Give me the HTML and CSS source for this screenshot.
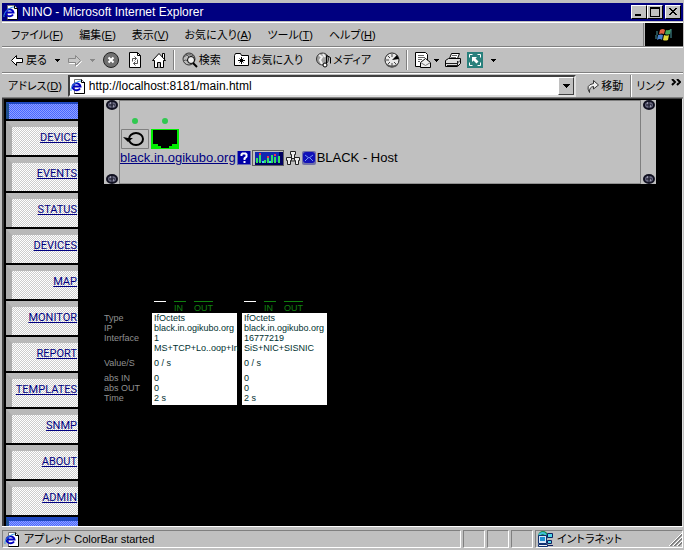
FILE: index.html
```html
<!DOCTYPE html>
<html lang="ja">
<head>
    <meta charset="UTF-8">
    <meta name="viewport" content="width=device-width, initial-scale=1.0">
    <title>NINO - Microsoft Internet Explorer</title>
    <link rel="stylesheet" href="styles.css">
</head>
<body>
    <!-- shared icons -->
    <svg class="sprites" aria-hidden="true">
        <symbol id="ie-page" viewBox="0 0 16 16">
            <path d="M4.500 1.500h7l3 3v11h-10z" fill="#fff" stroke="#777"/>
            <path d="M14.500 4v11.500h-10M11.500 1.500v3h3" fill="none" stroke="#000"/>
            <path d="M10 10.500a4 3.500 0 1 1 .5-2H3" fill="none" stroke="#0000c0" stroke-width="2"/>
            <path d="M1 13C0 9 6 3 11 3" fill="none" stroke="#3898e0"/>
        </symbol>
        <symbol id="screw" viewBox="0 0 12 10">
            <ellipse cx="6" cy="5" rx="6" ry="5" fill="#101020"/>
            <ellipse cx="6" cy="5" rx="4" ry="3" fill="#686880"/>
            <path d="M6 2v6M3 5h6" stroke="#181828"/>
            <path d="M4 3h1M7 6h1" stroke="#c8c8d8"/>
        </symbol>
    </svg>

    <header class="title-bar">
        <svg class="icon"><use href="#ie-page"/></svg>
        <h1>NINO - Microsoft Internet Explorer</h1>
        <div class="window-buttons">
            <button aria-label="Minimize"><svg viewBox="0 0 12 10"><path d="M2 7h6v2H2z"/></svg></button>
            <button aria-label="Maximize"><svg viewBox="0 0 12 10"><path d="M1 0h10v10H1zM2 2v7h8V2z" fill-rule="evenodd"/></svg></button>
            <button aria-label="Close" class="close"><svg viewBox="0 0 12 10"><path d="M2 1h2v1h1v1h2V2h1V1h2v1H9v1H8v1H7v1h1v1h1v1h1v1H8V7H7V6H5v1H4v1H2V7h1V6h1V5h1V4H4V3H3V2H2z"/></svg></button>
        </div>
    </header>

    <div class="menu-row">
        <nav class="menu">
            <button>ファイル(<u>F</u>)</button>
            <button>編集(<u>E</u>)</button>
            <button>表示(<u>V</u>)</button>
            <button>お気に入り(<u>A</u>)</button>
            <button>ツール(<u>T</u>)</button>
            <button>ヘルプ(<u>H</u>)</button>
        </nav>
        <div class="throbber">
            <svg viewBox="0 0 18 16">
                <path d="M5 3q3-2 5 0l-1 4q-2-1-5 0z" fill="#e06040"/>
                <path d="M11 3q2 1 5-1l-1 5q-3 1-5 0z" fill="#48a858"/>
                <path d="M3 8q3-1 5 0l-1 5q-2-2-5 0z" fill="#4880c8"/>
                <path d="M9 8q3 1 5 0l-1 5q-3 1-5 0z" fill="#e0d838"/>
                <path d="M1 5h2M1 7h2M0 9h2M0 11h2M16 2v9" stroke="#4898a0"/>
            </svg>
        </div>
    </div>

    <div class="tool-row">
        <button class="back">
            <svg class="arrow" viewBox="0 0 14 14"><path d="M1.500 7.500l5-5v3h6v4h-6v3z" fill="#fff" stroke="#000"/></svg>
            戻る
        </button>
        <button class="drop" aria-label="戻る一覧"><svg class="caret" viewBox="0 0 5 3"><path d="M0 0h5v1H4v1H3v1H2V2H1V1H0z"/></svg></button>
        <button class="forward" aria-label="進む"><svg class="arrow" viewBox="0 0 14 14"><path d="M13.500 8.500l-5-5v3h-7v4h7v3z" fill="none" stroke="#fff"/><path d="M12.500 7.500l-5-5v3h-7v4h7v3z" fill="#c8c8c8" stroke="#888"/></svg></button>
        <button class="drop off" aria-label="進む一覧"><svg class="caret" viewBox="0 0 5 3"><path d="M0 0h5v1H4v1H3v1H2V2H1V1H0z"/></svg></button>
        <div class="tool-group">
            <button aria-label="中止"><svg class="icon" viewBox="0 0 16 16"><circle cx="8" cy="8" r="7.500" fill="#707070" stroke="#222"/><path d="M5.500 5.500l5 5M10.500 5.500l-5 5" stroke="#fff" stroke-width="2"/></svg></button>
            <button aria-label="更新"><svg class="icon" viewBox="0 0 16 16"><path d="M2.500.5h8l3 3v12h-11z" fill="#fff" stroke="#000"/><path d="M10.500.5v3h3" fill="none" stroke="#000"/><path d="M5.500 9.500v-3h4M7.500 4.500l2 2-2 2M10.500 7.500v4h-4M8.500 9.500l-2 2 2 2" fill="none" stroke="#555"/></svg></button>
            <button aria-label="ホーム"><svg class="icon" viewBox="0 0 16 16"><path d="M11.500 1.500h2v6h-2z" fill="#fff" stroke="#000"/><path d="M1.500 8.500l6.500-7 6.500 7h-2v7h-9v-7z" fill="#fff" stroke="#000"/><path d="M6.500 15.500v-5h3v5" fill="#bbb" stroke="#000"/></svg></button>
        </div>
        <div class="tool-group ruled">
            <button>
                <svg class="icon" viewBox="0 0 16 16"><circle cx="7" cy="7" r="6" fill="#bbb" stroke="#333"/><path d="M2 5q4-4 10-1M1 9q3-2 5 0M4 2l3 3" stroke="#555" fill="none"/><circle cx="9" cy="8" r="3.500" fill="#eee" stroke="#000"/><path d="M11 11l4 4" stroke="#000" stroke-width="2"/></svg>
                検索
            </button>
            <button>
                <svg class="icon" viewBox="0 0 16 16"><path d="M.5 13.500v-10l1-2h5l1 2h7v10z" fill="#fff" stroke="#000"/><path d="M7.500 5v7M4 8.500h7M5.500 6.500l4 4M9.500 6.500l-4 4" stroke="#000"/></svg>
                お気に入り
            </button>
            <button>
                <svg class="icon" viewBox="0 0 16 16"><circle cx="6.500" cy="7" r="6" fill="#a0a0a0" stroke="#333"/><path d="M3 3l3 2-2 3 2 4M7 2l2 3" stroke="#eee" stroke-width="2" fill="none"/><path d="M10.500 13V3.500l4 2v6" stroke="#000" fill="none"/><ellipse cx="9" cy="13" rx="2" ry="2" fill="#fff" stroke="#000"/></svg>
                メディア
            </button>
            <button aria-label="履歴"><svg class="icon" viewBox="0 0 16 16"><circle cx="8" cy="8" r="7" fill="#e8e8e8" stroke="#222"/><path d="M8 8l5-5 2 4z" fill="#000"/><path d="M8 2v3M8 11v3M2 8h3M4 4l2 2M4 12l2-2M12 12l-2-2" stroke="#444"/><path d="M3 13q5 3 10 0" stroke="#555" stroke-width="2" fill="none"/></svg></button>
        </div>
        <div class="tool-group ruled last">
            <button class="mail" aria-label="メール">
                <svg class="icon" viewBox="0 0 16 16"><path d="M.5.5h10l2 2v12H.5z" fill="#fff" stroke="#000"/><path d="M3 3.500h6M3 5.500h7M3 7.500h4M3 9.500h2" stroke="#666"/><path d="M5.500 10.500l5-4 5 4v5h-10z" fill="#eee" stroke="#000"/><path d="M5.500 10.500l5 3 5-3" fill="none" stroke="#777"/></svg>
                <svg class="caret" viewBox="0 0 5 3"><path d="M0 0h5v1H4v1H3v1H2V2H1V1H0z"/></svg>
            </button>
            <button aria-label="印刷"><svg class="icon" viewBox="0 0 16 16"><path d="M4.500 6.500l2-5h8l-2 5z" fill="#fff" stroke="#000"/><path d="M7 3.500h5M6 5.500h5" stroke="#666"/><path d="M.5 8.500l3-2h12v5l-3 3H.5z" fill="#ddd" stroke="#000"/><path d="M1 11.500h11l3-3M2 13.500h10M12.500 9v5" fill="none" stroke="#222"/></svg></button>
            <button class="full" aria-label="全画面">
                <svg class="icon" viewBox="0 0 16 16"><path d="M0 0h16v16H0z" fill="#28807c"/><path d="M2.500 5.500v-3h3M10.500 2.500h3v3M13.500 10.500v3h-3M5.500 13.500h-3v-3" fill="none" stroke="#fff"/><path d="M5 5h5L8.500 6.500l3 3-2 2-3-3L5 10z" fill="#fff"/></svg>
                <svg class="caret" viewBox="0 0 5 3"><path d="M0 0h5v1H4v1H3v1H2V2H1V1H0z"/></svg>
            </button>
        </div>
    </div>

    <form class="address-row">
        <label for="address">アドレス(<u>D</u>)</label>
        <div class="combo">
            <svg class="icon"><use href="#ie-page"/></svg>
            <input type="text" id="address" value="http://localhost:8181/main.html">
            <button type="button" aria-label="一覧"><svg viewBox="0 0 7 4"><path d="M0 0h7v1H6v1H5v1H4v1H3V3H2V2H1V1H0z"/></svg></button>
        </div>
        <button type="button" class="go">
            <svg viewBox="0 0 14 14"><path d="M3.500 13.500Q-1 6 7.500 4.500v-3l5 4.500-5 4V7.500Q3 8 3.500 13.500z" fill="#eee" stroke="#333"/></svg>
            移動
        </button>
        <button type="button" class="links">リンク
            <svg viewBox="0 0 10 7"><path d="M1 0l3 3-3 3M6 0l3 3-3 3" fill="none" stroke="#000" stroke-width="2"/></svg>
        </button>
    </form>

    <div class="page">
        <nav class="side-nav">
            <div class="nav-cap"></div>
            <a href="#device">DEVICE</a>
            <a href="#events">EVENTS</a>
            <a href="#status">STATUS</a>
            <a href="#devices">DEVICES</a>
            <a href="#map">MAP</a>
            <a href="#monitor">MONITOR</a>
            <a href="#report">REPORT</a>
            <a href="#templates">TEMPLATES</a>
            <a href="#snmp">SNMP</a>
            <a href="#about">ABOUT</a>
            <a href="#admin">ADMIN</a>
            <div class="nav-cap end"></div>
        </nav>

        <main class="content">
            <section class="rack">
                <div class="rail">
                    <svg class="screw"><use href="#screw"/></svg>
                    <svg class="screw"><use href="#screw"/></svg>
                </div>
                <div class="rack-body">
                    <div class="ports">
                        <div class="port">
                            <span class="led"></span>
                            <svg viewBox="0 0 28 20"><path d="M.5.5h27v19H.5z" fill="#c0c0c0" stroke="#808080"/><ellipse cx="15" cy="10" rx="7" ry="6" fill="none" stroke="#000" stroke-width="2"/><path d="M2 8l5 5 5-4H7z"/></svg>
                        </div>
                        <div class="port">
                            <span class="led"></span>
                            <svg viewBox="0 0 28 20"><path d="M0 0h28v20H0z" fill="#0e0"/><path d="M2 1h24v14h-5v2h-3v2h-8v-2H7v-2H2z"/></svg>
                        </div>
                    </div>
                    <div class="host">
                        <a href="#host">black.in.ogikubo.org</a>
                        <svg class="small" viewBox="0 0 14 14"><path d="M0 0h14v14H0z" fill="#6868b0"/><path d="M1 0h12v13H1z" fill="#0000a8"/><path d="M4.500 5V3.500l1-1h3l1 1v2l-2 2v1.500M7.500 10v2" fill="none" stroke="#fff" stroke-width="2"/></svg>
                        <svg class="chart" viewBox="0 0 32 16"><path d="M.5.5h31v15H.5z" fill="#c0c0c0" stroke="#000" stroke-dasharray="1 1"/><path d="M3 2h28v13H3z" fill="#000060"/><path d="M3 2h24v10H3z" fill="#1028b0"/><path d="M5 8v5M8 5v8M13 10v3M16 8v5M20 5v8M23 7v6M27 6v7" stroke="#30e060" stroke-width="2"/><path d="M7 4h2M15 7h2M22 5h2" stroke="#f03050" stroke-width="2"/><path d="M10 12h2M17 12h2" stroke="#40d8f0" stroke-width="2"/></svg>
                        <svg class="cluster" viewBox="0 0 16 16"><path d="M8 6L4 11h8z" fill="none" stroke="#333"/><g fill="#eee" stroke="#222"><path d="M5.500 1.500h5v3h-1v4h-3v-4h-1zM1.500 7.500h5v3h-1v4h-3v-4h-1zM9.500 7.500h5v3h-1v4h-3v-4h-1z"/></g></svg>
                        <svg class="small" viewBox="0 0 14 14"><rect width="14" height="14" rx="2" fill="#7070a8"/><rect x="1" y="1" width="12" height="11" rx="3" fill="#1010b8"/><path d="M3 4l4 3 4-3M3 10l3-3M11 10L8 7" fill="none" stroke="#7898f0"/></svg>
                        <span>BLACK - Host</span>
                    </div>
                </div>
                <div class="rail">
                    <svg class="screw"><use href="#screw"/></svg>
                    <svg class="screw"><use href="#screw"/></svg>
                </div>
            </section>

            <table class="monitor">
                <thead>
                    <tr>
                        <td></td>
                        <th><div class="legend"><span class="all"></span><span>IN</span><span>OUT</span></div></th>
                        <th><div class="legend"><span class="all"></span><span>IN</span><span>OUT</span></div></th>
                    </tr>
                </thead>
                <tbody>
                    <tr><th>Type</th><td>IfOctets</td><td>IfOctets</td></tr>
                    <tr><th>IP</th><td>black.in.ogikubo.org</td><td>black.in.ogikubo.org</td></tr>
                    <tr><th>Interface</th><td>1</td><td>16777219</td></tr>
                    <tr><th></th><td>MS+TCP+Lo..oop+In</td><td>SiS+NIC+SISNIC</td></tr>
                    <tr class="rate"><th>Value/S</th><td>0 / s</td><td>0 / s</td></tr>
                    <tr><th>abs IN</th><td>0</td><td>0</td></tr>
                    <tr><th>abs OUT</th><td>0</td><td>0</td></tr>
                    <tr><th>Time</th><td>2 s</td><td>2 s</td></tr>
                </tbody>
            </table>
        </main>
    </div>

    <footer class="status-bar">
        <div class="pane message"><svg class="icon"><use href="#ie-page"/></svg>アプレット ColorBar started</div>
        <div class="pane"></div>
        <div class="pane"></div>
        <div class="pane"></div>
        <div class="pane zone">
            <svg class="icon" viewBox="0 0 16 16"><circle cx="6" cy="5" r="5" fill="#188848"/><path d="M2 4q4-4 7 0" stroke="#40c0e0" stroke-width="2" fill="none"/><path d="M1.500 4.500h8v8h-8z" fill="#d8e8f8" stroke="#103070"/><path d="M3 6h5v4H3z" fill="#2090d0"/><path d="M1.500 13.500h9v2h-9z" fill="#eee" stroke="#103070"/><path d="M10.500 2.500h5v4h-5zM10.500 9.500h4v3h-4z" fill="#50d8e8" stroke="#102060"/><path d="M11 14.500h5" stroke="#102060"/></svg>
            イントラネット
            <svg class="grip" viewBox="0 0 14 14"><path d="M1 14L14 1M5 14l9-9M9 14l5-5" stroke="#fff"/><path d="M2 14L14 2M3 14L14 3M6 14l8-8M7 14l7-7M10 14l4-4M11 14l3-3" stroke="#808080"/></svg>
        </div>
    </footer>
</body>
</html>
```

FILE: styles.css
```css
* {
    box-sizing: border-box;
}

body {
    margin: 0;
    padding: 3px 1px 0 2px;
    height: 100vh;
    display: flex;
    flex-direction: column;
    overflow: hidden;
    background-color: #c0c0c0;
    color: #000;
    font-family: "Liberation Sans", "Noto Sans CJK JP", sans-serif;
    font-size: 11px;
    font-feature-settings: "palt";
    line-height: 16px;
}

button {
    display: flex;
    align-items: center;
    padding: 0;
    border: none;
    background: none;
    color: inherit;
    font: inherit;
    font-feature-settings: inherit;
    white-space: nowrap;
}

svg {
    display: block;
    flex-shrink: 0;
}

.sprites {
    position: absolute;
    width: 0;
    height: 0;
}

.icon {
    width: 16px;
    height: 16px;
}

/* Title bar */
.title-bar {
    display: flex;
    align-items: center;
    gap: 3px;
    height: 18px;
    padding: 0 2px 0 1px;
    background-color: #000080;
    color: #fff;
}

.title-bar h1 {
    flex-grow: 1;
    margin: 0;
    font-size: 12px;
    font-weight: normal;
}

.window-buttons {
    display: flex;
}

.window-buttons button {
    width: 16px;
    height: 14px;
    padding: 0 1px;
    border: 1px solid;
    border-color: #fff #000 #000 #fff;
    background-color: #c0c0c0;
}

.window-buttons .close {
    margin-left: 2px;
}

.window-buttons svg {
    width: 12px;
    height: 10px;
}

/* Menu, toolbar and address rows */
.menu-row,
.tool-row,
.address-row {
    display: flex;
    align-items: center;
    border-top: 1px solid #fff;
    border-bottom: 1px solid #808080;
}

.menu-row {
    height: 25px;
    margin-top: 1px;
    align-items: stretch;
}

.menu {
    display: flex;
    flex-grow: 1;
    align-items: center;
    gap: 16px;
    padding-left: 9px;
    border-right: 1px solid #808080;
}

.throbber {
    display: flex;
    align-items: center;
    justify-content: center;
    width: 38px;
    margin-left: 1px;
    background-color: #000;
}

.throbber svg {
    width: 18px;
    height: 16px;
}

.tool-row {
    height: 26px;
}

.arrow {
    width: 14px;
    height: 14px;
}

.caret {
    width: 5px;
    height: 3px;
}

.back {
    gap: 2px;
    padding-left: 8px;
}

.drop {
    padding: 6px 8px;
}

.drop.off {
    color: #888;
    fill: #888;
}

.tool-group {
    display: flex;
    align-items: center;
    gap: 8px;
    height: 20px;
}

.tool-group.ruled {
    gap: 13px;
    margin-left: 7px;
    padding-left: 7px;
    border-left: 1px solid #fff;
    box-shadow: -1px 0 #808080;
}

.tool-group.last {
    gap: 6px;
}

.tool-group button {
    gap: 1px;
}

.tool-group .mail {
    gap: 3px;
}

.tool-group .full {
    gap: 8px;
}

.address-row {
    height: 25px;
}

.address-row label {
    padding: 0 6px;
    white-space: nowrap;
}

.combo {
    display: flex;
    flex-grow: 1;
    align-items: center;
    height: 22px;
    border: 2px solid;
    border-color: #404040 #e0e0e0 #e0e0e0 #404040;
    background-color: #fff;
}

.combo input {
    flex-grow: 1;
    min-width: 0;
    padding: 0 3px;
    border: none;
    outline: none;
    background: none;
    font: inherit;
    font-size: 12px;
}

.combo button {
    width: 16px;
    height: 18px;
    justify-content: center;
    border: 1px solid;
    border-color: #fff #404040 #404040 #fff;
    background-color: #c0c0c0;
}

.combo button svg {
    width: 7px;
    height: 4px;
}

.go {
    gap: 1px;
    margin-left: 10px;
}

.go svg {
    width: 14px;
    height: 14px;
}

.links {
    gap: 6px;
    height: 22px;
    margin-left: 8px;
    padding: 0 2px 0 4px;
    border-left: 1px solid #fff;
    box-shadow: -1px 0 #808080;
}

.links svg {
    width: 10px;
    height: 7px;
    margin-bottom: 6px;
}

/* Page area */
.page {
    display: flex;
    flex: 1;
    min-height: 0;
    border-top: 1px solid #404040;
    border-left: 2px solid #404040;
    border-right: 1px solid #e0e0e0;
    background-color: #000;
}

.side-nav {
    display: flex;
    flex-direction: column;
    gap: 2px;
    width: 74px;
    padding: 3px 0 0 2px;
    overflow: hidden;
}

.side-nav a {
    display: flex;
    flex-shrink: 0;
    align-items: center;
    justify-content: flex-end;
    height: 34px;
    padding: 0 1px 6px 0;
    border-top: 6px solid #b8b8b8;
    border-left: 6px solid #acacac;
    background: repeating-conic-gradient(#fff 0 25%, #ccc 0 50%) 0 0 / 2px 2px;
    color: #000080;
    font-family: Roboto, sans-serif;
    font-size: 11px;
}

.nav-cap {
    flex-shrink: 0;
    height: 17px;
    border-top: 2px solid #2048c0;
    border-left: 3px solid #205090;
    background: repeating-conic-gradient(#4868ff 0 25%, #90a0ff 0 50%) 0 0 / 2px 2px;
}

.nav-cap.end {
    border-top-width: 4px;
}

.content {
    flex: 1;
    min-width: 0;
    padding: 1px 26px 0;
}

.rack {
    display: flex;
    height: 84px;
    background-color: #c0c0c0;
}

.rail {
    display: flex;
    flex-direction: column;
    justify-content: space-between;
    align-items: center;
    width: 15px;
}

.screw {
    width: 12px;
    height: 10px;
}

.rack-body {
    display: flex;
    flex: 1;
    flex-direction: column;
    padding-top: 17px;
    border: 1px solid #808080;
    border-bottom-color: #909090;
}

.ports {
    display: flex;
    gap: 2px;
    padding-left: 1px;
}

.port {
    display: flex;
    flex-direction: column;
    align-items: center;
    gap: 5px;
}

.port svg {
    width: 28px;
    height: 20px;
}

.led {
    width: 6px;
    height: 6px;
    border-radius: 50%;
    background-color: #30c850;
}

.host {
    display: flex;
    align-items: center;
    gap: 1px;
    margin-top: 1px;
    font-size: 13px;
}

.host a {
    color: #000080;
}

.small {
    width: 14px;
    height: 14px;
}

.chart {
    width: 32px;
    height: 16px;
}

.cluster {
    width: 16px;
    height: 16px;
}

/* Interface counters */
.monitor {
    margin-top: 117px;
    border-collapse: separate;
    border-spacing: 0;
    table-layout: fixed;
    width: 223px;
    font-size: 9px;
    line-height: 10px;
    text-align: left;
}

.monitor th,
.monitor td {
    height: 10px;
    padding: 0;
    font-weight: normal;
    white-space: nowrap;
}

.monitor tr > :first-child {
    width: 43px;
    color: #909090;
}

.monitor tr > :not(:first-child) {
    width: 90px;
    border-left: 5px solid #000;
}

.monitor tbody td {
    padding-left: 2px;
    background-color: #fff;
    color: #003030;
}

.monitor .rate > * {
    height: 20px;
}

.monitor tbody tr:last-child > * {
    height: 12px;
    padding-bottom: 2px;
}

.legend {
    display: flex;
    gap: 8px;
    padding-left: 2px;
    color: #108010;
}

.legend span {
    min-width: 12px;
    height: 12px;
    padding-top: 1px;
    border-top: 1px solid #108010;
}

.legend .all {
    border-top-color: #fff;
}

/* Status bar */
.status-bar {
    display: flex;
    gap: 2px;
    height: 24px;
    padding: 3px 0 2px;
    border-top: 1px solid #fff;
}

.pane {
    display: flex;
    align-items: center;
    gap: 4px;
    width: 22px;
    border: 1px solid;
    border-color: #808080 #fff #fff #808080;
    white-space: nowrap;
}

.message {
    flex: 1;
    padding-left: 1px;
}

.zone {
    width: 148px;
    padding-left: 1px;
}

.grip {
    width: 14px;
    height: 14px;
    margin-left: auto;
}
```
